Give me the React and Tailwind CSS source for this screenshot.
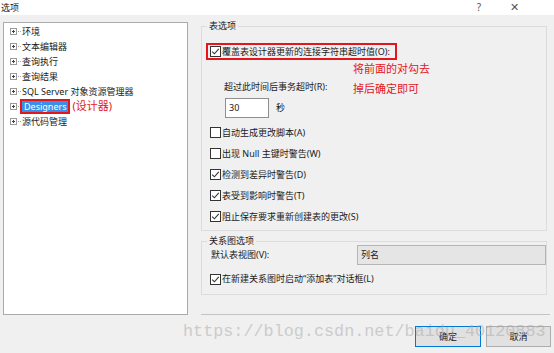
import React from 'react'

const font = { fontFamily: '"Noto Sans", "Noto Sans CJK SC", sans-serif' }

const Expander = () => (
  <svg width="12" height="9" viewBox="0 0 12 9" className="shrink-0">
    <rect x="0.5" y="1.5" width="6" height="6" fill="#fff" stroke="#9a9a9a" />
    <path d="M2 4.5h3M3.5 3v3" stroke="#444" strokeWidth="1" />
    <path d="M8 4.5h1M10 4.5h1" stroke="#a0a0a0" strokeWidth="1" />
  </svg>
)

const Box = ({ checked }) => (
  <svg width="11" height="11" viewBox="0 0 11 11" className="shrink-0">
    <rect x="0.5" y="0.5" width="10" height="10" fill="#fff" stroke="#333" />
    {checked && <path d="M2.2 5.6 L4.4 7.8 L8.8 2.8" fill="none" stroke="#333" strokeWidth="1.1" />}
  </svg>
)

const Check = ({ checked, label, className = '' }) => (
  <div className={`flex items-center gap-[1px] text-[9px] leading-[12px] text-[#1a1a1a] ${className}`}>
    <Box checked={checked} />
    <span>{label}</span>
  </div>
)

const treeItems = ['环境', '文本编辑器', '查询执行', '查询结果', 'SQL Server 对象资源管理器', 'Designers', '源代码管理']

export default function App() {
  return (
    <div className="relative w-[554px] h-[353px] bg-[#f0f0f0] overflow-hidden" style={font}>
      {/* title bar */}
      <div className="h-[15px] bg-white flex items-center text-[9px] text-[#1a1a1a]">
        <span className="pl-[1px]">选项</span>
        <span className="ml-auto mr-[29px] text-[10px] text-[#555]">?</span>
        <span className="mr-[35px] text-[11px] text-[#555]">✕</span>
      </div>

      <div className="flex pt-[7px]">
        {/* tree */}
        <div className="ml-[3px] w-[185px] h-[293px] border border-[#ababab] bg-white pt-[1px] pl-[6px] shrink-0">
          {treeItems.map((t) => (
            <div key={t} className="h-[15px] flex items-center text-[9px] text-[#1a1a1a]">
              <Expander />
              {t === 'Designers' ? (
                <>
                  <span className="ml-[-2px] border-2 border-[#e3161c] bg-[#3b8fe8] text-white px-[2px] leading-[11px]">Designers</span>
                  <span className="ml-[2px] text-[11px] text-[#e3161c]">(设计器)</span>
                </>
              ) : (
                <span>{t}</span>
              )}
            </div>
          ))}
        </div>

        {/* right pane */}
        <div className="ml-[13px] w-[350px] flex flex-col">
          <fieldset className="w-[346px] border border-[#dcdcdc] pb-[3px]">
            <legend className="ml-[5px] px-[2px] text-[9px] leading-[8px] text-[#1a1a1a]">表选项</legend>
            <div className="relative">
              <div className="mt-[13px] ml-[4px] w-[191px] h-[17px] border-2 border-[#e3161c] flex items-center pl-[2px]">
                <Check checked label="覆盖表设计器更新的连接字符串超时值(O):" />
              </div>
              <div className="absolute left-[151px] top-[19px] text-[11px] leading-[14px] text-[#e3161c]">将前面的对勾去</div>
              <div className="absolute left-[151px] top-[39px] text-[11px] leading-[14px] text-[#e3161c]">掉后确定即可</div>
              <div className="mt-[21px] ml-[22px] text-[9px] leading-[12px] text-[#1a1a1a]">超过此时间后事务超时(R):</div>
              <div className="mt-[5px] ml-[23px] flex items-center">
                <div className="w-[44px] h-[20px] border border-[#8f8f8f] bg-white text-[9px] leading-[18px] pl-[3px] text-[#1a1a1a]">30</div>
                <span className="ml-[7px] text-[9px] text-[#1a1a1a]">秒</span>
              </div>
              <div className="mt-[4px] ml-[8px] flex flex-col">
                <Check className="h-[21px]" label="自动生成更改脚本(A)" />
                <Check className="h-[21px]" label="出现 Null 主键时警告(W)" />
                <Check className="h-[21px]" checked label="检测到差异时警告(D)" />
                <Check className="h-[21px]" checked label="表受到影响时警告(T)" />
                <Check className="h-[21px]" checked label="阻止保存要求重新创建表的更改(S)" />
              </div>
            </div>
          </fieldset>

          <fieldset className="mt-[6px] w-[346px] border border-[#dcdcdc] pb-[8px]">
            <legend className="ml-[5px] px-[2px] text-[9px] leading-[8px] text-[#1a1a1a]">关系图选项</legend>
            <div className="flex items-center h-[20px]">
              <span className="ml-[9px] w-[146px] text-[9px] text-[#1a1a1a]">默认表视图(V):</span>
              <div className="flex-1 h-[20px] border border-[#b5b5b5] bg-[#e5e5e5] text-[9px] leading-[18px] pl-[3px] text-[#1a1a1a]">列名</div>
            </div>
            <Check className="mt-[7px] ml-[8px] h-[14px]" checked label="在新建关系图时启动“添加表”对话框(L)" />
          </fieldset>

          <div className="mt-[19px] h-px w-[349px] bg-[#c4c4c4]" />

          <div className="mt-[11px] flex justify-end gap-[5px]">
            <div className="w-[66px] h-[21px] border border-[#0078d7] bg-[#e1e1e1] flex items-center justify-center text-[9px] text-[#1a1a1a]">确定</div>
            <div className="w-[65px] h-[21px] border border-[#adadad] bg-[#e1e1e1] flex items-center justify-center text-[9px] text-[#1a1a1a]">取消</div>
          </div>
        </div>
      </div>

      {/* watermark */}
      <div
        className="absolute left-[183px] top-[322px] text-[16.8px] leading-[20px] text-[#a8a8a8] opacity-50 pointer-events-none whitespace-nowrap"
        style={{ fontFamily: '"Liberation Mono", monospace' }}
      >
        https://blog.csdn.net/baidu_40120883
      </div>
    </div>
  )
}
